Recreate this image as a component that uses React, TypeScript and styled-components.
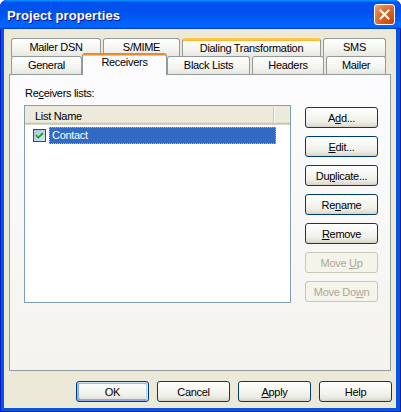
import * as React from 'react'
import styled, { createGlobalStyle, css } from 'styled-components'

const Global = createGlobalStyle`
  html, body {
    margin: 0;
    padding: 0;
    background: #ffffff;
  }
  body {
    font-family: 'Liberation Sans', Arial, sans-serif;
    font-size: 11px;
  }
`

const Window = styled.div`
  width: 401px;
  height: 412px;
  display: flex;
  flex-direction: column;
  background: #0855dd;
  border-radius: 7px 7px 0 0;
  overflow: hidden;
  box-shadow: inset 1px 0 #0019cf, inset -1px 0 #001ea0, inset 0 -1px #001ea0;
`

const TitleBar = styled.div`
  height: 29px;
  flex: none;
  display: flex;
  align-items: center;
  justify-content: space-between;
  padding: 1px 6px 0 7px;
  box-sizing: border-box;
  background: linear-gradient(
    180deg,
    #0997ff,
    #0053ee 8%,
    #0050ee 40%,
    #0066ff 88%,
    #0066ff 93%,
    #005bff 95%,
    #003dd7 96%,
    #003dd7
  );
`

const Title = styled.span`
  color: #ffffff;
  font-weight: bold;
  font-size: 13px;
  letter-spacing: 0.1px;
  text-shadow: 1px 1px #0f1089;
`

const CloseButton = styled.div`
  width: 19px;
  height: 19px;
  border: 1px solid #ffffff;
  border-radius: 3px;
  display: flex;
  align-items: center;
  justify-content: center;
  background: radial-gradient(circle at 90% 90%, #cc4600 0, #dc6527 55%, #f3a688 100%);
  margin-top: -2px;
`

const Body = styled.div`
  flex: 1;
  margin: 0 5px 4px 4px;
  background: #ece9d8;
  padding: 9px 0 0 5px;
  display: flex;
  flex-direction: column;
  letter-spacing: -0.3px;
`

const TabRow = styled.div`
  display: flex;
  height: 18px;
  padding-left: 2px;
  position: relative;
`

const Tab = styled.div<{ $w: number; $gap?: number; $hot?: boolean; $selected?: boolean }>`
  box-sizing: border-box;
  width: ${({ $w }) => $w}px;
  margin-left: ${({ $gap }) => $gap || 0}px;
  height: 19px;
  border: 1px solid #919b9c;
  border-bottom: none;
  border-radius: 3px 3px 0 0;
  background: linear-gradient(180deg, #ffffff, #f3f3ef 60%, #e6e4dc);
  color: #000000;
  text-align: center;
  line-height: 17px;
  white-space: nowrap;
  ${({ $hot }) =>
    $hot &&
    css`
      border-top: 2px solid #ffc83c;
      box-shadow: inset 0 1px #f9b53c;
      line-height: 16px;
    `}
  ${({ $selected }) =>
    $selected &&
    css`
      position: relative;
      z-index: 2;
      height: 22px;
      margin-top: -3px;
      background: #fcfcfe;
      border-top: 2px solid #e68b2c;
      box-shadow: inset 0 1px #ffc83c;
      line-height: 15px;
    `}
`

const Panel = styled.div`
  box-sizing: border-box;
  width: 382px;
  height: 297px;
  border: 1px solid #919b9c;
  background: linear-gradient(180deg, #fcfcfe, #f4f3ee);
  padding: 12px 0 0 14px;
  display: flex;
  position: relative;
  z-index: 1;
`

const ListColumn = styled.div`
  display: flex;
  flex-direction: column;
`

const Label = styled.div`
  line-height: 13px;
  margin-bottom: 5px;
  padding-left: 1px;
`

const ListBox = styled.div`
  box-sizing: border-box;
  width: 267px;
  height: 198px;
  border: 1px solid #7f9db9;
  background: #ffffff;
`

const Header = styled.div`
  height: 19px;
  box-sizing: border-box;
  display: flex;
  background: #ebeadb;
  box-shadow: inset 0 -1px #d6d2c2, inset 0 -2px #cbc7b8, inset 0 -3px #e2decd;
`

const HeaderCell = styled.div<{ $w: number }>`
  box-sizing: border-box;
  width: ${({ $w }) => $w}px;
  padding: 3px 0 0 10px;
  border-right: 1px solid #c7c5b2;
  box-shadow: 1px 0 #ffffff;
  height: 16px;
  margin-top: 1px;
`

const Row = styled.div`
  display: flex;
  align-items: center;
  margin-top: 2px;
  padding-left: 8px;
  height: 17px;
`

const Check = styled.span`
  width: 13px;
  height: 13px;
  box-sizing: border-box;
  border: 1px solid #1c5180;
  background: linear-gradient(135deg, #a9c3e3, #d8e6f5);
  display: flex;
  align-items: center;
  justify-content: center;
  margin-right: 3px;
`

const RowText = styled.div`
  box-sizing: border-box;
  width: 227px;
  height: 17px;
  background: #316ac5;
  color: #ffffff;
  border: 1px dotted #e0a94c;
  padding-left: 2px;
  line-height: 15px;
`

const ButtonColumn = styled.div`
  display: flex;
  flex-direction: column;
  gap: 8px;
  margin: 20px 0 0 14px;
`

const Button = styled.button<{ $default?: boolean }>`
  box-sizing: border-box;
  width: 73px;
  height: 21px;
  padding: 0;
  font-family: 'Liberation Sans', Arial, sans-serif;
  font-size: 11px;
  letter-spacing: -0.3px;
  color: #000000;
  border: 1px solid #003c74;
  border-radius: 3px;
  background: linear-gradient(180deg, #ffffff, #f0f0ea 70%, #e3e0d6 90%, #d6d0c5);
  u {
    text-decoration: underline;
  }
  ${({ $default }) =>
    $default &&
    css`
      box-shadow: inset -1px 1px #cee7ff, inset 1px 2px #98b8ea, inset -2px 2px #bcd4f6,
        inset 1px -1px #89ade4, inset 2px -2px #89ade4;
    `}
  &:disabled {
    border-color: #c9c7ba;
    background: #f5f4ea;
    color: #aca899;
  }
`

const Footer = styled.div`
  display: flex;
  justify-content: flex-end;
  gap: 8px;
  padding: 10px 4px 0 0;
`

function CloseIcon() {
  return (
    <svg width="11" height="11" viewBox="0 0 11 11">
      <path d="M1.5 1.5 L9.5 9.5 M9.5 1.5 L1.5 9.5" stroke="#ffffff" strokeWidth="2.2" strokeLinecap="square" />
    </svg>
  )
}

function CheckMark() {
  return (
    <svg width="9" height="9" viewBox="0 0 9 9">
      <path d="M1 4.2 L3.4 6.6 L8 2" stroke="#21a121" strokeWidth="1.8" fill="none" />
    </svg>
  )
}

export default function App() {
  return (
    <Window>
      <Global />
      <TitleBar>
        <Title>Project properties</Title>
        <CloseButton>
          <CloseIcon />
        </CloseButton>
      </TitleBar>
      <Body>
        <TabRow>
          <Tab $w={90}>Mailer DSN</Tab>
          <Tab $w={77} $gap={2}>S/MIME</Tab>
          <Tab $w={139} $gap={2} $hot>Dialing Transformation</Tab>
          <Tab $w={63} $gap={2}>SMS</Tab>
        </TabRow>
        <TabRow>
          <Tab $w={71}>General</Tab>
          <Tab $w={85} $selected>Receivers</Tab>
          <Tab $w={83}>Black Lists</Tab>
          <Tab $w={72} $gap={2}>Headers</Tab>
          <Tab $w={60} $gap={2}>Mailer</Tab>
        </TabRow>
        <Panel>
          <ListColumn>
            <Label>
              Re<u>c</u>eivers lists:
            </Label>
            <ListBox>
              <Header>
                <HeaderCell $w={249}>List Name</HeaderCell>
              </Header>
              <Row>
                <Check>
                  <CheckMark />
                </Check>
                <RowText>Contact</RowText>
              </Row>
            </ListBox>
          </ListColumn>
          <ButtonColumn>
            <Button>
              A<u>d</u>d...
            </Button>
            <Button>
              <u>E</u>dit...
            </Button>
            <Button>
              Du<u>p</u>licate...
            </Button>
            <Button>
              Re<u>n</u>ame
            </Button>
            <Button>
              <u>R</u>emove
            </Button>
            <Button disabled>
              Move <u>U</u>p
            </Button>
            <Button disabled>
              Move Do<u>w</u>n
            </Button>
          </ButtonColumn>
        </Panel>
        <Footer>
          <Button $default>OK</Button>
          <Button>Cancel</Button>
          <Button>
            <u>A</u>pply
          </Button>
          <Button>Help</Button>
        </Footer>
      </Body>
    </Window>
  )
}
